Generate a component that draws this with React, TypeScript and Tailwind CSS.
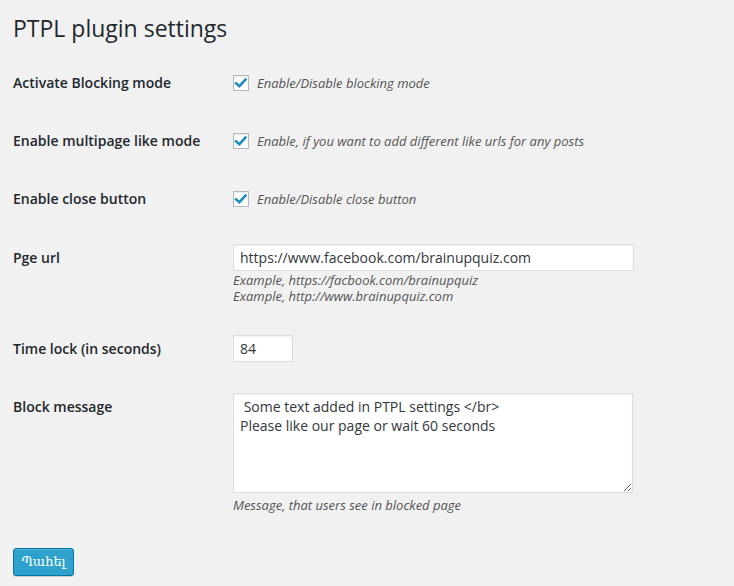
import React, { useState } from 'react';

const font = { fontFamily: '"Open Sans", "Noto Sans", sans-serif' };

function Check({ checked, onChange }: { checked: boolean; onChange: () => void }) {
  return (
    <button
      type="button"
      onClick={onChange}
      className="w-4 h-4 shrink-0 bg-white border border-[#b4b9be] shadow-[inset_0_1px_2px_rgba(0,0,0,0.1)] flex items-center justify-center"
    >
      {checked && (
        <svg width="14" height="14" viewBox="0 0 14 14">
          <path d="M2.2 7.4 L5.4 10.2 L11.4 3.6" fill="none" stroke="#1e8cbe" strokeWidth="2.6" strokeLinecap="square" />
        </svg>
      )}
    </button>
  );
}

function CheckRow({ label, text }: { label: string; text: string }) {
  const [on, setOn] = useState(true);
  return (
    <div className="flex items-center h-[58px]">
      <div className="w-[220px] shrink-0 text-[14px] font-semibold leading-[20px] text-[#23282d]">{label}</div>
      <Check checked={on} onChange={() => setOn(!on)} />
      <span className="ml-2 text-[13px] italic text-[#555] leading-[16px]">{text}</span>
    </div>
  );
}

export default function App() {
  const [url, setUrl] = useState('https://www.facebook.com/brainupquiz.com');
  const [time, setTime] = useState('84');
  const [msg, setMsg] = useState(' Some text added in PTPL settings </br>\nPlease like our page or wait 60 seconds');

  const input =
    'bg-white border border-[#ddd] shadow-[inset_0_1px_2px_rgba(0,0,0,0.07)] text-[14px] text-[#32373c] px-[6px] outline-none h-[27px]';

  return (
    <div className="min-h-[586px] bg-[#f1f1f1] px-[13px] pt-[14px]" style={font}>
      <h1 className="text-[23px] leading-[29px] font-normal text-[#23282d]">PTPL plugin settings</h1>

      <div className="mt-[11px]">
        <CheckRow label="Activate Blocking mode" text="Enable/Disable blocking mode" />
        <CheckRow label="Enable multipage like mode" text="Enable, if you want to add different like urls for any posts" />
        <CheckRow label="Enable close button" text="Enable/Disable close button" />
      </div>

      <div className="flex pt-[16px]">
        <div className="w-[220px] shrink-0 text-[14px] font-semibold leading-[27px] text-[#23282d]">Pge url</div>
        <div>
          <input className={`${input} w-[401px]`} style={font} value={url} onChange={e => setUrl(e.target.value)} />
          <p className="mt-[1px] text-[13px] italic text-[#555] leading-[16px]">Example, https://facbook.com/brainupquiz</p>
          <p className="text-[13px] italic text-[#555] leading-[16px]">Example, http://www.brainupquiz.com</p>
        </div>
      </div>

      <div className="flex pt-[31px]">
        <div className="w-[220px] shrink-0 text-[14px] font-semibold leading-[27px] text-[#23282d]">Time lock (in seconds)</div>
        <input className={`${input} w-[60px]`} style={font} value={time} onChange={e => setTime(e.target.value)} />
      </div>

      <div className="flex pt-[31px]">
        <div className="w-[220px] shrink-0 text-[14px] font-semibold leading-[28px] text-[#23282d]">Block message</div>
        <div>
          <textarea
            className="block w-[400px] h-[100px] bg-white border border-[#ddd] shadow-[inset_0_1px_2px_rgba(0,0,0,0.07)] text-[14px] text-[#32373c] leading-[19px] px-[6px] py-[3px] outline-none"
            style={font}
            value={msg}
            onChange={e => setMsg(e.target.value)}
          />
          <p className="mt-[4px] text-[13px] italic text-[#555] leading-[16px]">Message, that users see in blocked page</p>
        </div>
      </div>

      <button
        type="button"
        className="mt-[35px] w-[61px] h-[28px] rounded-[3px] bg-[#2ea2cc] border border-[#0074a2] text-white text-[13px] shadow-[inset_0_1px_0_rgba(120,200,230,0.5),0_1px_0_rgba(0,0,0,0.15)]"
        style={{ fontFamily: '"Open Sans", "DejaVu Serif", serif' }}
      >
        Պահել
      </button>
    </div>
  );
}
